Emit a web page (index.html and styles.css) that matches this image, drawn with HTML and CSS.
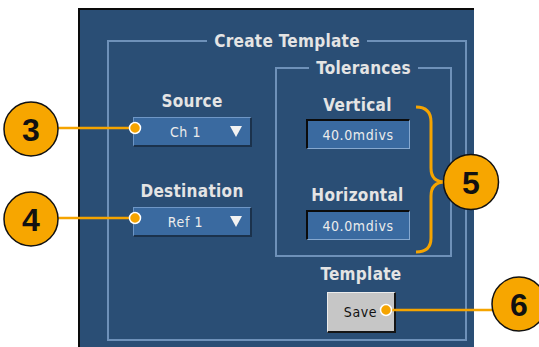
FILE: index.html
```html
<!DOCTYPE html>
<html lang="en">
<head>
  <meta charset="UTF-8">
  <title>Create Template</title>
  <link rel="stylesheet" href="styles.css">
</head>
<body>
  <div class="panel">
    <fieldset class="create">
      <legend>Create Template</legend>
      <div class="cols">
        <div class="left">
          <div class="label source-label">Source</div>
          <div class="dropdown">
            <span class="value">Ch 1</span>
            <svg class="arrow" width="12" height="11" viewBox="0 0 12 11"><polygon points="0,0 12,0 6,11" fill="#f2f2f2"/></svg>
          </div>
          <div class="label dest-label">Destination</div>
          <div class="dropdown">
            <span class="value">Ref 1</span>
            <svg class="arrow" width="12" height="11" viewBox="0 0 12 11"><polygon points="0,0 12,0 6,11" fill="#f2f2f2"/></svg>
          </div>
        </div>

        <div class="right">
          <fieldset class="tol">
            <legend>Tolerances</legend>
            <div class="tol-stack">
              <div class="label vert-label">Vertical</div>
              <div class="field">40.0mdivs</div>
              <div class="label horiz-label">Horizontal</div>
              <div class="field">40.0mdivs</div>
            </div>
          </fieldset>
          <div class="template">
            <div class="label">Template</div>
            <button class="save">Save</button>
          </div>
        </div>
      </div>
    </fieldset>
  </div>

  <!-- callout annotations drawn over the screen -->
  <svg class="callouts" width="539" height="347" viewBox="0 0 539 347">
    <g stroke="#f5a400" stroke-width="2.5" fill="none">
      <line x1="58" y1="128" x2="135" y2="128"/>
      <line x1="58" y1="218" x2="135" y2="218"/>
      <line x1="386" y1="310" x2="494" y2="310"/>
      <path d="M416 107 Q431 107 431 122 L431 168 Q431 182 445 182 Q431 182 431 196 L431 238 Q431 252 416 252" stroke-width="3"/>
    </g>
    <g fill="#f5a400" stroke="#ffffff" stroke-width="1.5">
      <circle cx="135" cy="128" r="5.5"/>
      <circle cx="135" cy="218" r="5.5"/>
      <circle cx="386" cy="310" r="5.5"/>
    </g>
    <g fill="#f7a600" stroke="#111111" stroke-width="1.5">
      <circle cx="31" cy="129" r="27"/>
      <circle cx="31" cy="219" r="27"/>
      <circle cx="471" cy="182" r="27.5"/>
      <circle cx="519" cy="304" r="27"/>
    </g>
    <g class="num">
      <text x="31" y="141">3</text>
      <text x="31" y="231">4</text>
      <text x="471" y="194">5</text>
      <text x="519" y="316">6</text>
    </g>
  </svg>
</body>
</html>
```

FILE: styles.css
```css
* {
  box-sizing: border-box;
}

html, body {
  margin: 0;
  padding: 0;
  background: #ffffff;
  overflow: hidden;
}

body {
  position: relative;
  width: 539px;
  height: 347px;
}

.panel {
  margin: 8px 0 0 78px;
  width: 396px;
  height: 339px;
  background: #2a4e75;
  border-top: 2px solid #0a0a0a;
  border-left: 2px solid #0a0a0a;
  padding-top: 22px;
}

fieldset {
  margin: 0;
  padding: 0;
  min-inline-size: 0;
  border: 2px solid #6e91b9;
}

legend {
  margin: 0 auto;
  padding: 0 7px;
  height: 18px;
  line-height: 18px;
}

legend,
.label {
  font-family: "DejaVu Sans Condensed", "DejaVu Sans", sans-serif;
  font-stretch: condensed;
  font-weight: bold;
  font-size: 17px;
  line-height: 18px;
  color: #e4e4e4;
  letter-spacing: 0.3px;
}

.create {
  margin-left: 27px;
  width: 360px;
  padding-bottom: 6px;
}

.cols {
  display: flex;
}

.left {
  width: 166px;
  display: flex;
  flex-direction: column;
  align-items: center;
}

.source-label {
  margin-top: 42px;
}

.dest-label {
  margin-top: 35px;
}

.dropdown {
  margin-top: 7px;
  width: 119px;
  height: 30px;
  display: flex;
  align-items: center;
  background: #3a6aa0;
  border-top: 1px solid #6f97c6;
  border-left: 1px solid #6f97c6;
  border-right: 2px solid #1b324c;
  border-bottom: 2px solid #1b324c;
}

.dropdown .value {
  flex: 1;
  text-align: center;
  padding-left: 8px;
}

.dropdown .arrow {
  margin-right: 8px;
}

.value,
.field,
.save {
  font-family: "DejaVu Sans Condensed", "DejaVu Sans", sans-serif;
  font-stretch: condensed;
  font-size: 14px;
  letter-spacing: 0.6px;
}

.value,
.field {
  color: #ececec;
}

.right {
  width: 177px;
}

.tol {
  margin-top: 9px;
  padding-bottom: 15px;
}

.tol-stack {
  margin-right: 12px;
  display: flex;
  flex-direction: column;
  align-items: center;
}

.vert-label {
  margin-top: 19px;
}

.horiz-label {
  margin-top: 37px;
}

.field {
  margin-top: 5px;
  width: 104px;
  height: 30px;
  display: flex;
  align-items: center;
  justify-content: center;
  background: #3a6aa0;
  border-top: 2px solid #0b0b0b;
  border-left: 2px solid #0b0b0b;
  border-right: 1px solid #86a8cf;
  border-bottom: 1px solid #86a8cf;
}

.horiz-label + .field {
  margin-top: 6px;
}

.template {
  padding-right: 5px;
  display: flex;
  flex-direction: column;
  align-items: center;
}

.template .label {
  margin-top: 8px;
}

.save {
  margin-top: 9px;
  width: 69px;
  height: 41px;
  padding: 0;
  color: #111111;
  background: #c6c6c6;
  border-top: 1px solid #ececec;
  border-left: 1px solid #ececec;
  border-right: 2px solid #151515;
  border-bottom: 2px solid #151515;
  border-radius: 0;
}

.callouts {
  position: absolute;
  top: 0;
  left: 0;
  pointer-events: none;
}

.num text {
  font-family: "Liberation Sans", Arial, sans-serif;
  font-weight: bold;
  font-size: 32px;
  fill: #111111;
  text-anchor: middle;
}
```
